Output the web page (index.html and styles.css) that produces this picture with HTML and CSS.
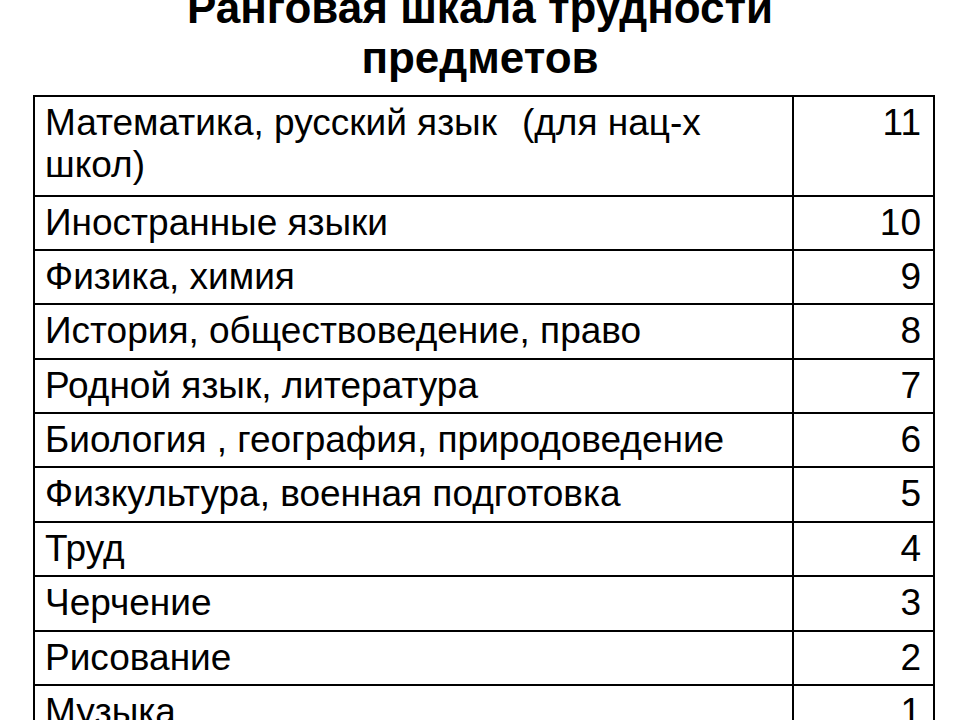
FILE: index.html
```html
<!DOCTYPE html>
<html lang="ru">
<head>
<meta charset="utf-8">
<title>Ранговая шкала трудности предметов</title>
<link rel="stylesheet" href="styles.css">
</head>
<body>
<div class="slide">
  <h1 class="title">Ранговая шкала трудности<br>предметов</h1>
  <table class="scale">
    <tr class="tall"><td class="subj">Математика, русский язык<span class="gap"></span>(для нац-х школ)</td><td class="rank">11</td></tr>
    <tr><td class="subj">Иностранные языки</td><td class="rank">10</td></tr>
    <tr><td class="subj">Физика, химия</td><td class="rank">9</td></tr>
    <tr><td class="subj">История, обществоведение, право</td><td class="rank">8</td></tr>
    <tr><td class="subj">Родной язык, литература</td><td class="rank">7</td></tr>
    <tr><td class="subj">Биология , география, природоведение</td><td class="rank">6</td></tr>
    <tr><td class="subj">Физкультура, военная подготовка</td><td class="rank">5</td></tr>
    <tr><td class="subj">Труд</td><td class="rank">4</td></tr>
    <tr><td class="subj">Черчение</td><td class="rank">3</td></tr>
    <tr><td class="subj">Рисование</td><td class="rank">2</td></tr>
    <tr><td class="subj">Музыка</td><td class="rank">1</td></tr>
  </table>
</div>
</body>
</html>
```
FILE: styles.css
```css
html, body {
  margin: 0;
  padding: 0;
  background: #ffffff;
  overflow: hidden;
}
.slide {
  width: 960px;
  height: 720px;
  overflow: hidden;
  font-family: "Liberation Sans", Arial, sans-serif;
  color: #000;
  padding-left: 33px;
  box-sizing: border-box;
}
.title {
  margin: -17px 0 0 -33px;
  font-size: 44px;
  line-height: 50px;
  font-weight: bold;
  text-align: center;
  width: 960px;
  padding-bottom: 12px;
}
.scale {
  border-collapse: collapse;
  width: 902px;
  table-layout: fixed;
}
.scale td {
  border: 2px solid #000;
  font-size: 37px;
  line-height: 42px;
  vertical-align: top;
  padding: 5px 12px 0 10px;
  height: 54.4px;
  box-sizing: border-box;
}
.scale tr.tall td {
  height: 99.5px;
}
.scale td.subj {
  width: 759px;
}
.scale td.rank {
  text-align: right;
}
.gap {
  display: inline-block;
  width: 25px;
}
```
